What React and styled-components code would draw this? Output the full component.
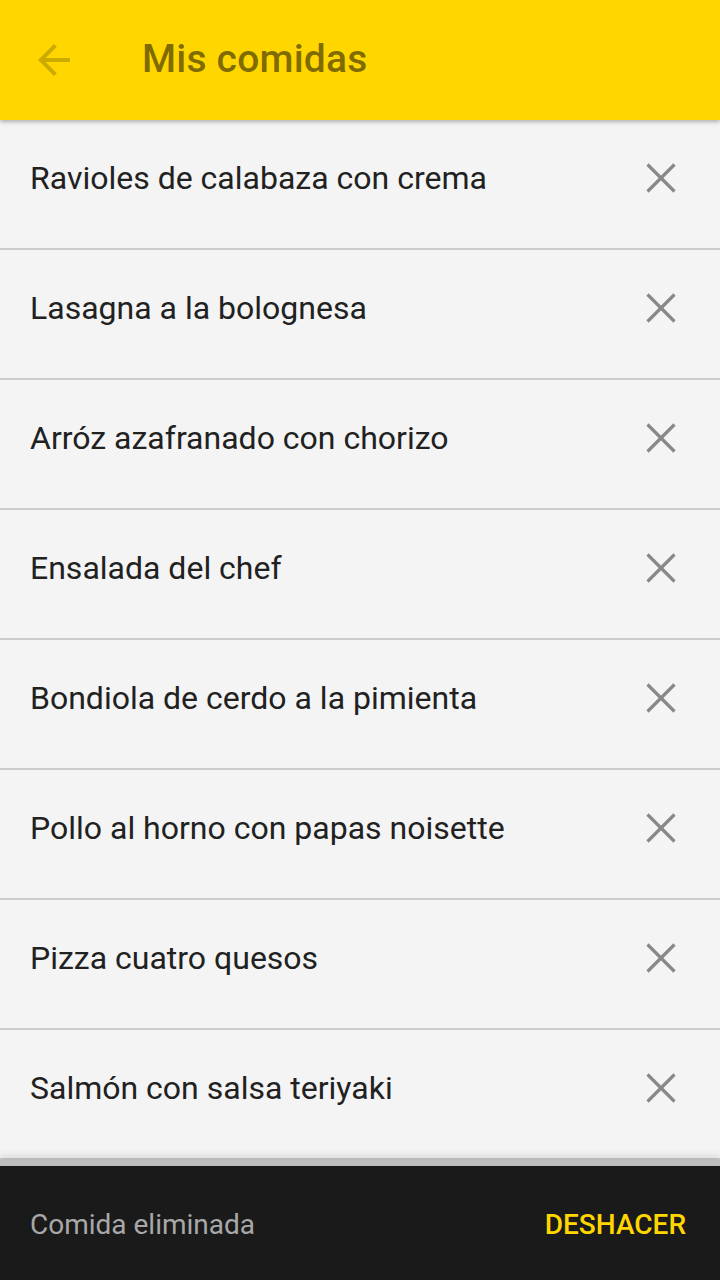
import React from 'react';
import styled, { createGlobalStyle } from 'styled-components';

const GlobalStyle = createGlobalStyle`
  html, body {
    margin: 0;
    padding: 0;
    background: #f4f4f4;
  }
  * { box-sizing: border-box; }
`;

// Whole screen column
const Screen = styled.div`
  width: 720px;
  height: 1280px;
  display: flex;
  flex-direction: column;
  overflow: hidden;
  background: #f4f4f4;
  font-family: Roboto, "Noto Sans", sans-serif;
`;

// Yellow app bar
const AppBar = styled.header`
  flex: 0 0 120px;
  display: flex;
  align-items: center;
  background: #ffd600;
  box-shadow: 0 2px 4px rgba(0, 0, 0, 0.28);
  position: relative;
  z-index: 2;
`;

const BackButton = styled.button`
  width: 48px;
  height: 48px;
  margin-left: 30px;
  padding: 0;
  border: none;
  background: transparent;
  display: flex;
  align-items: center;
  justify-content: center;
  color: rgba(0, 0, 0, 0.2);
`;

const Title = styled.h1`
  margin: -2px 0 0 64px;
  font-size: 39px;
  font-weight: 500;
  letter-spacing: 0.2px;
  color: rgba(0, 0, 0, 0.52);
`;

// List of saved meals
const List = styled.ul`
  flex: 1;
  margin: 0;
  padding: 0;
  list-style: none;
  overflow: hidden;
`;

const Row = styled.li`
  height: 130px;
  display: flex;
  align-items: center;
  justify-content: space-between;
  padding: 0 35px 0 30px;
  border-bottom: 2px solid #cccccc;
`;

const MealName = styled.span`
  font-size: 32px;
  color: #212121;
  margin-top: -12px;
`;

const RemoveButton = styled.button`
  width: 48px;
  height: 48px;
  padding: 0;
  border: none;
  background: transparent;
  display: flex;
  align-items: center;
  justify-content: center;
  color: #888888;
  margin-top: -12px;
`;

// Bottom snackbar
const Snackbar = styled.div`
  flex: 0 0 120px;
  display: flex;
  align-items: center;
  justify-content: space-between;
  padding: 0 34px 0 30px;
  background: #1a1a1a;
  border-top: 6px solid #bdbdbd;
  box-shadow: 0 -4px 8px rgba(0, 0, 0, 0.12);
  position: relative;
  z-index: 2;
`;

const SnackText = styled.span`
  font-size: 28px;
  color: #a8a8a8;
  margin-top: 2px;
`;

const SnackAction = styled.button`
  padding: 0;
  border: none;
  background: transparent;
  font-family: inherit;
  font-size: 28px;
  font-weight: 500;
  color: #ffd600;
  margin-top: 2px;
`;

const ArrowIcon = () => (
  <svg width="48" height="48" viewBox="0 0 24 24" fill="currentColor">
    <path d="M20 11H7.83l5.59-5.59L12 4l-8 8 8 8 1.41-1.41L7.83 13H20v-2z" />
  </svg>
);

const CloseIcon = () => (
  <svg width="30" height="30" viewBox="0 0 30 30" stroke="currentColor" strokeWidth="3.2" strokeLinecap="butt">
    <line x1="1.5" y1="1.5" x2="28.5" y2="28.5" />
    <line x1="28.5" y1="1.5" x2="1.5" y2="28.5" />
  </svg>
);

const meals = [
  'Ravioles de calabaza con crema',
  'Lasagna a la bolognesa',
  'Arróz azafranado con chorizo',
  'Ensalada del chef',
  'Bondiola de cerdo a la pimienta',
  'Pollo al horno con papas noisette',
  'Pizza cuatro quesos',
  'Salmón con salsa teriyaki',
];

const App = () => (
  <>
    <GlobalStyle />
    <Screen>
      <AppBar>
        <BackButton aria-label="Volver">
          <ArrowIcon />
        </BackButton>
        <Title>Mis comidas</Title>
      </AppBar>
      <List>
        {meals.map((meal) => (
          <Row key={meal}>
            <MealName>{meal}</MealName>
            <RemoveButton aria-label="Eliminar">
              <CloseIcon />
            </RemoveButton>
          </Row>
        ))}
      </List>
      <Snackbar>
        <SnackText>Comida eliminada</SnackText>
        <SnackAction>DESHACER</SnackAction>
      </Snackbar>
    </Screen>
  </>
);

export default App;
